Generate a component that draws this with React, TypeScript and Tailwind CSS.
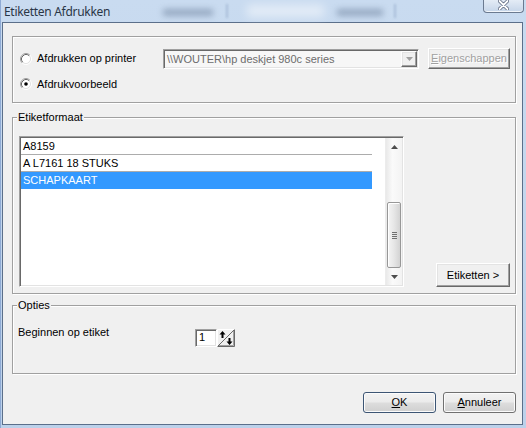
import type { ReactNode } from "react";

const cn = (...c: (string | false | undefined)[]) => c.filter(Boolean).join(" ");

const raised =
  "border border-t-white border-l-white border-r-[#696969] border-b-[#696969] shadow-[inset_-1px_-1px_0_#a0a0a0,inset_1px_1px_0_#e3e3e3] bg-[#f0f0f0]";
const sunken =
  "border border-t-[#a0a0a0] border-l-[#a0a0a0] border-r-white border-b-white shadow-[inset_1px_1px_0_#696969,inset_-1px_-1px_0_#e3e3e3] p-[1px]";

const Radio = ({ checked = false }: { checked?: boolean }) => (
  <svg width="12" height="12" viewBox="0 0 12 12" className="shrink-0">
    <circle cx="6" cy="6" r="4.5" fill="#fff" />
    <path d="M2.11 9.89A5.5 5.5 0 0 1 9.89 2.11" fill="none" stroke="#a0a0a0" />
    <path d="M9.89 2.11A5.5 5.5 0 0 1 2.11 9.89" fill="none" stroke="#fff" />
    <path d="M2.82 9.18A4.5 4.5 0 0 1 9.18 2.82" fill="none" stroke="#696969" />
    <path d="M9.18 2.82A4.5 4.5 0 0 1 2.82 9.18" fill="none" stroke="#e3e3e3" />
    {checked && <circle cx="6" cy="6" r="1.8" fill="#000" />}
  </svg>
);

const GroupBox = ({
  label,
  className,
  children,
}: {
  label?: string;
  className?: string;
  children: ReactNode;
}) => (
  <div
    className={cn(
      "relative w-[504px] border border-[#a0a0a0] shadow-[inset_1px_1px_0_#fff,1px_1px_0_#fff]",
      className,
    )}
  >
    {label && (
      <span className="absolute left-[4px] top-[-7px] bg-[#f0f0f0] px-[1px] leading-[13px]">
        {label}
      </span>
    )}
    {children}
  </div>
);

const Win7Button = ({
  children,
  isDefault = false,
}: {
  children: ReactNode;
  isDefault?: boolean;
}) => (
  <div
    className={cn(
      "w-[73px] h-[21px] rounded-[3px] border flex items-center justify-center bg-[linear-gradient(#f2f2f2_0%,#ebebeb_48%,#dddddd_52%,#cfcfcf_100%)] shadow-[inset_0_0_0_1px_#fbfbfb]",
      isDefault ? "border-[#3c5574]" : "border-[#707070]",
    )}
  >
    {children}
  </div>
);

const listItems = ["A8159", "A L7161 18 STUKS", "SCHAPKAART"];

export default function App() {
  return (
    <div className="w-[526px] h-[428px] overflow-hidden flex flex-col bg-[linear-gradient(#c9dbf0,#bcd1ea)] border-l border-[#8eaad4] font-['Liberation_Sans',Arial,sans-serif] text-[11px] leading-[13px] text-black">
      {/* title bar, with the blurred glass behind it */}
      <div className="h-[22px] shrink-0 flex items-center">
        <div className="w-[162px] pl-[3px] font-['Noto_Sans',sans-serif] text-[12px] tracking-[-0.3px] text-[#2a3646]">
          Etiketten Afdrukken
        </div>
        <div className="w-[50px] h-[7px] mt-[3px] bg-[#7387a2] blur-[3px] opacity-60" />
        <div className="ml-[13px] w-[2px] h-[14px] bg-[#a9bed9] blur-[1px]" />
        <div className="ml-[19px] w-[77px] h-[12px] bg-white/50 blur-[5px]" />
        <div className="ml-[13px] w-[46px] h-[7px] mt-[3px] bg-[#7387a2] blur-[3px] opacity-60" />
        <div className="ml-[11px] w-[2px] h-[14px] bg-[#a9bed9] blur-[1px]" />
        <div className="ml-auto mr-[2px] self-start w-[41px] h-[13px] rounded-b-[4px] border border-t-0 border-[#6b7a90] bg-[linear-gradient(#e4ecf6,#c5d5e9)] shadow-[inset_0_-1px_0_#f2f6fb] flex justify-center">
          <svg width="11" height="10" viewBox="0 0 11 10">
            <path d="M1.5 1 L9.5 9 M9.5 1 L1.5 9" stroke="#56627a" strokeWidth="3.4" strokeLinecap="round" />
            <path d="M1.5 1 L9.5 9 M9.5 1 L1.5 9" stroke="#fff" strokeWidth="1.8" strokeLinecap="round" />
          </svg>
        </div>
      </div>

      {/* client area */}
      <div className="ml-[1px] w-[521px] h-[403px] shrink-0 border border-[#5b6f8a] bg-[#f0f0f0] pl-[9px] pt-[13px]">
        <GroupBox className="h-[67px] pt-[11px] pl-[7px]">
          <div className="flex items-center h-[21px]">
            <div className="w-[143px] flex items-center gap-[5px]">
              <Radio />
              <span>Afdrukken op printer</span>
            </div>
            <div className={cn(sunken, "w-[256px] h-[20px] bg-[#f7f7f7] flex items-stretch")}>
              <span className="flex-1 pl-[2px] pt-[2px] text-[#6d6d6d] whitespace-nowrap">
                \\WOUTER\hp deskjet 980c series
              </span>
              <div className={cn(raised, "w-[16px] flex items-center justify-center")}>
                <svg width="7" height="4" viewBox="0 0 7 4">
                  <path d="M0 0 H7 L3.5 4 Z" fill="#a0a0a0" />
                </svg>
              </div>
            </div>
            <div className={cn(raised, "ml-[9px] w-[82px] h-[21px] flex items-center justify-center text-[#a0a0a0] [text-shadow:1px_1px_0_#fff]")}>
              <span className="underline underline-offset-[1px]">E</span>igenschappen
            </div>
          </div>
          <div className="mt-[5px] flex items-center h-[20px] gap-[5px]">
            <Radio checked />
            <span>Afdrukvoorbeeld</span>
          </div>
        </GroupBox>

        <GroupBox label="Etiketformaat" className="mt-[14px] h-[177px] pt-[18px] pl-[6px] flex items-end pb-[6px]">
          <div className={cn(sunken, "w-[385px] h-[151px] bg-white flex")}>
            <div className="w-[351px]">
              {listItems.map((item, i) => (
                <div
                  key={item}
                  className={cn(
                    "h-[17px] pl-[2px] flex items-center",
                    i < 2 && "border-b border-[#acacac]",
                    i === 2 && "bg-[#3399ff] text-white",
                  )}
                >
                  {item}
                </div>
              ))}
            </div>
            <div className="ml-auto w-[17px] flex flex-col bg-[linear-gradient(90deg,#e9e9e9,#fafafa_40%,#f3f3f3)] border-l border-[#ececec]">
              <div className="h-[17px] flex items-center justify-center">
                <svg width="7" height="4" viewBox="0 0 7 4">
                  <path d="M0 4 H7 L3.5 0 Z" fill="#4d4d4d" />
                </svg>
              </div>
              <div className="h-[47px]" />
              <div className="h-[66px] mx-[1px] rounded-[2px] border border-[#979797] bg-[linear-gradient(90deg,#f4f4f4,#e6e6e6_50%,#d3d3d3)] shadow-[inset_1px_1px_0_#fff] flex items-center justify-center">
                <svg width="5" height="7" viewBox="0 0 5 7">
                  <path d="M0 0.5 H5 M0 2.5 H5 M0 4.5 H5 M0 6.5 H5" stroke="#6f6f6f" strokeWidth="1" />
                </svg>
              </div>
              <div className="h-[17px] flex items-center justify-center">
                <svg width="7" height="4" viewBox="0 0 7 4">
                  <path d="M0 0 H7 L3.5 4 Z" fill="#4d4d4d" />
                </svg>
              </div>
            </div>
          </div>
          <div className={cn(raised, "ml-[32px] w-[74px] h-[24px] flex items-center justify-center")}>
            Etiketten &gt;
          </div>
        </GroupBox>

        <GroupBox label="Opties" className="mt-[11px] h-[69px] pt-[20px] pl-[5px] flex items-start">
          <span className="w-[177px]">Beginnen op etiket</span>
          <div className="mt-[3px] flex">
            <div className={cn(sunken, "w-[22px] h-[18px] bg-white pl-[3px] pt-[1px]")}>1</div>
            <svg width="18" height="18" viewBox="0 0 18 18">
              <rect x="0" y="0" width="18" height="18" fill="#f0f0f0" />
              <path d="M0.5 17.5 V0.5 H17.5" fill="none" stroke="#fff" />
              <path d="M0.5 17.5 H17.5 V0.5" fill="none" stroke="#696969" />
              <path d="M1.5 16.5 H16.5 V1.5" fill="none" stroke="#a0a0a0" />
              <path d="M1 17 L17 1" stroke="#696969" strokeWidth="1" />
              <path d="M5.5 2 L8.5 5.5 H6.5 V9 H4.5 V5.5 H2.5 Z" fill="#000" />
              <path d="M11.5 9 H13.5 V12.5 H15.5 L12.5 16 L9.5 12.5 H11.5 Z" fill="#000" />
            </svg>
          </div>
        </GroupBox>

        <div className="w-[504px] mt-[18px] flex justify-end gap-[7px]">
          <Win7Button isDefault>
            <span className="underline underline-offset-[1px]">O</span>K
          </Win7Button>
          <Win7Button>
            <span className="underline underline-offset-[1px]">A</span>nnuleer
          </Win7Button>
        </div>
      </div>
    </div>
  );
}
